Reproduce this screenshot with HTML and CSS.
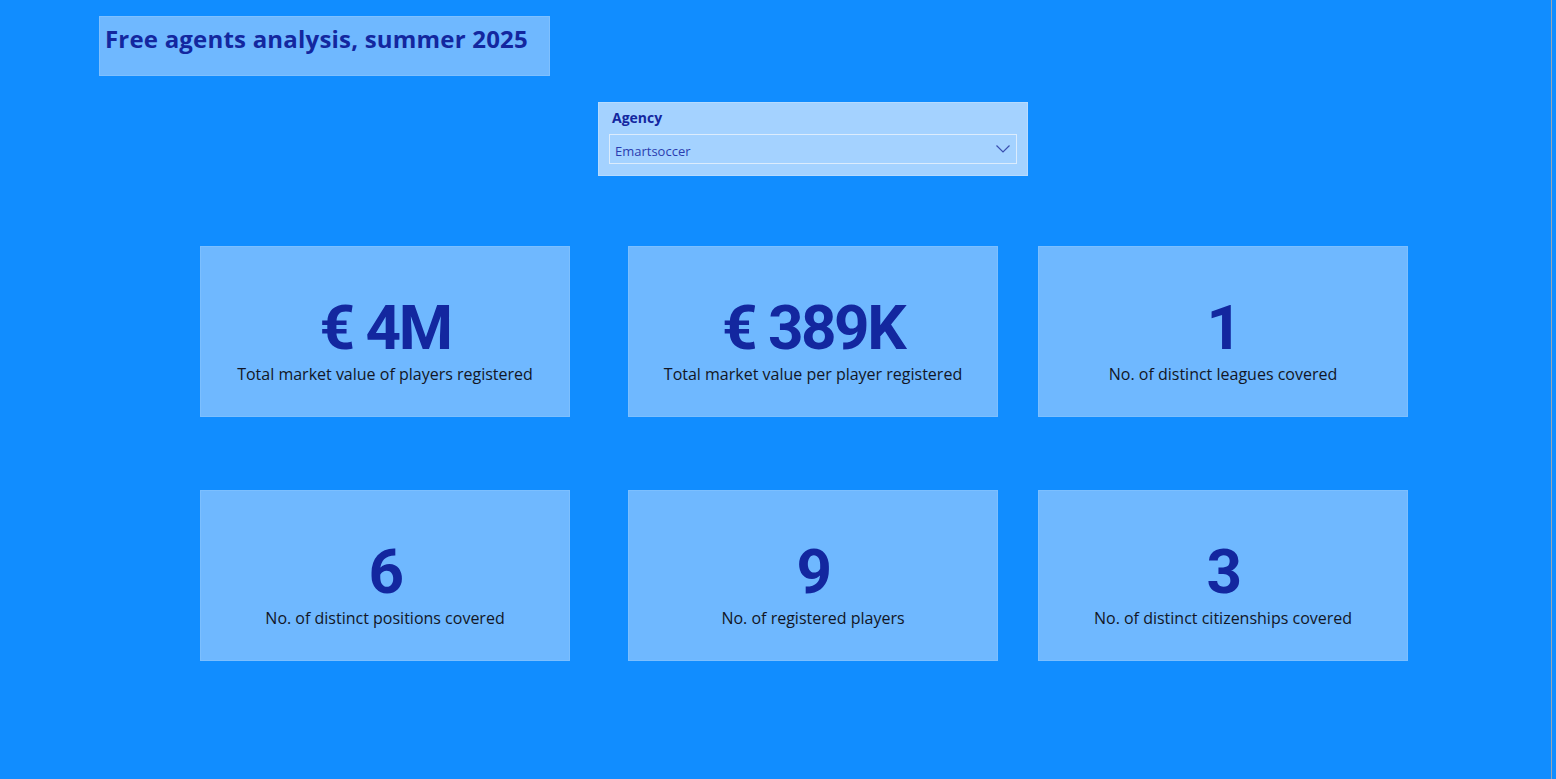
FILE: index.html
```html
<!DOCTYPE html>
<html lang="en">
<head>
<meta charset="utf-8">
<title>Free agents analysis, summer 2025</title>
<link rel="stylesheet" href="styles.css">
</head>
<body>
<div class="page">
  <header class="title-box">
    <h1 class="title">Free agents analysis, summer 2025</h1>
  </header>

  <section class="slicer">
    <div class="slicer-label">Agency</div>
    <div class="dropdown">
      <span class="dropdown-value">Emartsoccer</span>
      <svg class="chevron" width="14" height="8" viewBox="0 0 14 8"><path d="M0.5 0.5 L7 7 L13.5 0.5" fill="none" stroke="#3a4fb0" stroke-width="1.2"/></svg>
    </div>
  </section>

  <main class="cards">
    <div class="card">
      <div class="value">€ 4M</div>
      <div class="label">Total market value of players registered</div>
    </div>
    <div class="card">
      <div class="value">€ 389K</div>
      <div class="label">Total market value per player registered</div>
    </div>
    <div class="card">
      <div class="value">1</div>
      <div class="label">No. of distinct leagues covered</div>
    </div>
    <div class="card">
      <div class="value">6</div>
      <div class="label">No. of distinct positions covered</div>
    </div>
    <div class="card">
      <div class="value">9</div>
      <div class="label">No. of registered players</div>
    </div>
    <div class="card">
      <div class="value">3</div>
      <div class="label">No. of distinct citizenships covered</div>
    </div>
  </main>
</div>
</body>
</html>
```

FILE: styles.css
```css
* { box-sizing: border-box; }

html, body {
  margin: 0;
  padding: 0;
  background: #118dff;
}

.page {
  width: 1552px;
  height: 779px;
  overflow: hidden;
  background: #118dff;
  border-right: 1px solid #9aa6b4;
  display: flex;
  flex-direction: column;
  align-items: flex-start;
}

.title-box {
  margin: 16px 0 0 99px;
  width: 451px;
  height: 60px;
  background: #6fb8ff;
  border: 1px solid #7fc0ff;
  padding: 5px 0 0 5px;
}

.title {
  margin: 0;
  font-family: "Open Sans", "Noto Sans", sans-serif;
  font-weight: 700;
  font-size: 24px;
  line-height: 34px;
  color: #13279f;
  letter-spacing: 0.2px;
}

.slicer {
  margin: 26px 0 0 598px;
  width: 430px;
  height: 74px;
  background: #a4d2ff;
  border: 1px solid #b6dbff;
  padding: 5px 10px 0 10px;
}

.slicer-label {
  font-family: "Open Sans", "Noto Sans", sans-serif;
  font-weight: 700;
  font-size: 14px;
  line-height: 20px;
  color: #13279f;
  padding-left: 3px;
}

.dropdown {
  margin-top: 6px;
  height: 30px;
  border: 1px solid #dcecfc;
  display: flex;
  align-items: center;
  justify-content: space-between;
  padding: 0 6px 0 5px;
}

.dropdown-value {
  font-family: "Open Sans", "Noto Sans", sans-serif;
  font-size: 13px;
  color: #2a3db0;
  padding-top: 3px;
}

.chevron { margin-top: 0; }

.cards {
  margin: 70px 0 0 200px;
  display: grid;
  grid-template-columns: 428px 410px 370px;
  grid-template-rows: 171px 171px;
  row-gap: 73px;
}

.card {
  width: 370px;
  height: 171px;
  background: #6fb8ff;
  border: 1px solid #7cbfff;
  display: flex;
  flex-direction: column;
  align-items: center;
  padding-top: 46px;
}

.value {
  font-family: "Roboto", "DejaVu Sans Condensed", sans-serif;
  font-weight: 700;
  font-size: 62px;
  line-height: 70px;
  letter-spacing: -2.5px;
  color: #13279f;
}

.label {
  font-family: "Open Sans", "Noto Sans", sans-serif;
  font-size: 16px;
  line-height: 22px;
  color: #121626;
  margin-top: 0;
}
```
